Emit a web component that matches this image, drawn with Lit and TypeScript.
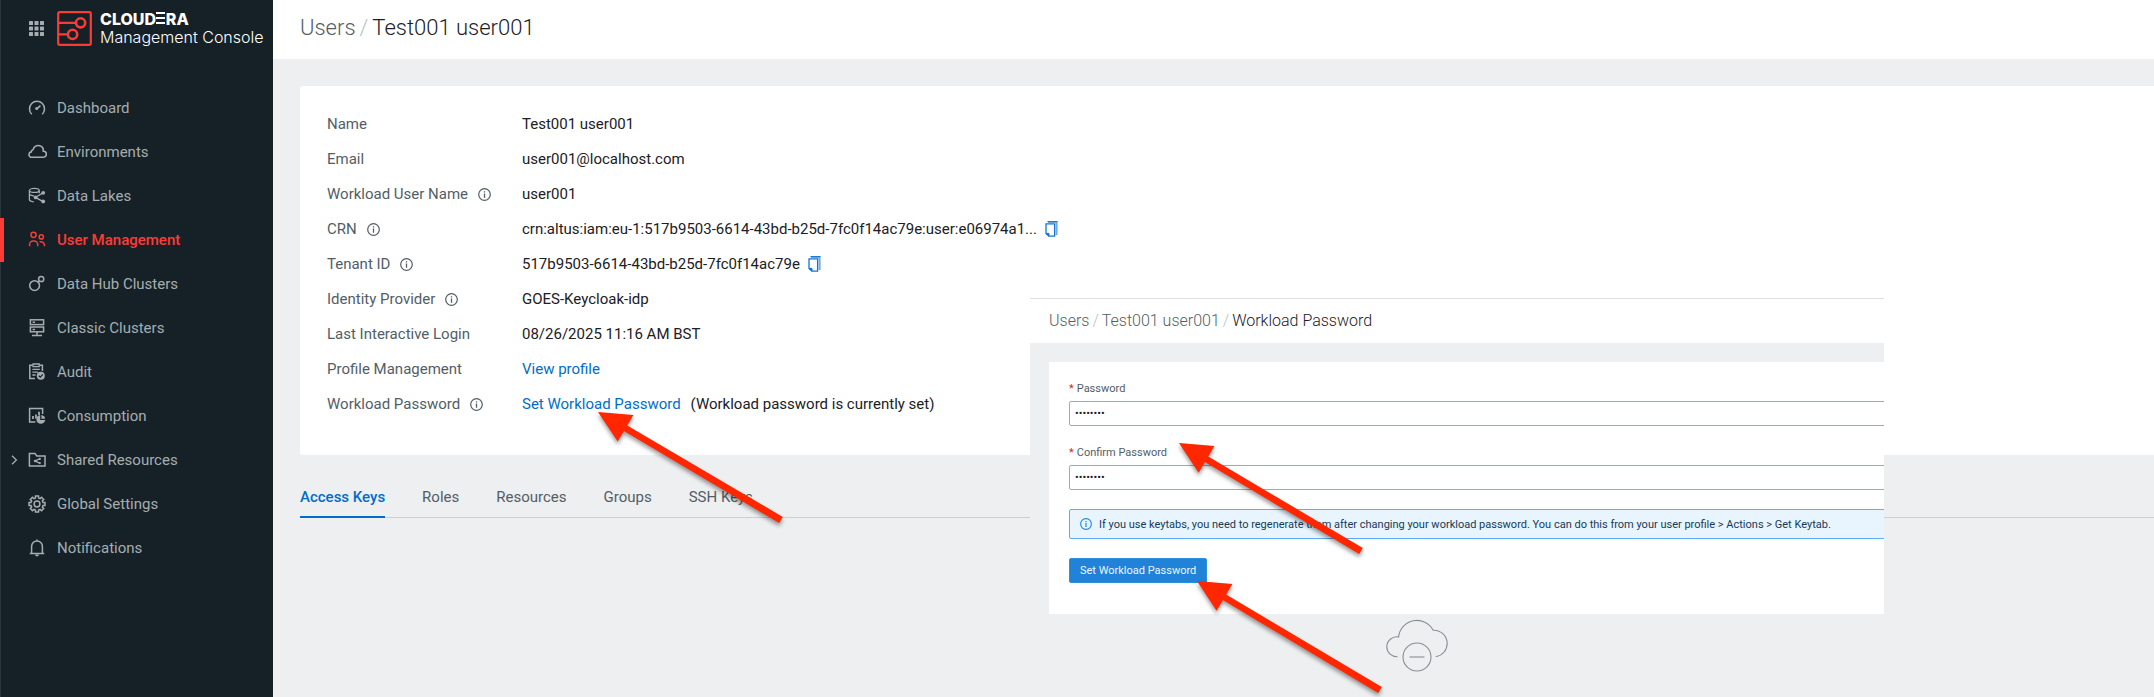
import { LitElement, html, svg, css, nothing } from "lit";
import { customElement, property } from "lit/decorators.js";
import { classMap } from "lit/directives/class-map.js";

type NavItem = { label: string; icon: string; active?: boolean; expandable?: boolean };
type Detail = { label: string; info?: boolean; value?: string; copy?: boolean; link?: string; note?: string };
type Arrow = { tip: [number, number]; tail: [number, number] };

const NAV: NavItem[] = [
  { label: "Dashboard", icon: "gauge" },
  { label: "Environments", icon: "cloud" },
  { label: "Data Lakes", icon: "lake" },
  { label: "User Management", icon: "users", active: true },
  { label: "Data Hub Clusters", icon: "hub" },
  { label: "Classic Clusters", icon: "servers" },
  { label: "Audit", icon: "audit" },
  { label: "Consumption", icon: "usage" },
  { label: "Shared Resources", icon: "folder", expandable: true },
  { label: "Global Settings", icon: "gear" },
  { label: "Notifications", icon: "bell" },
];

const DETAILS: Detail[] = [
  { label: "Name", value: "Test001 user001" },
  { label: "Email", value: "user001@localhost.com" },
  { label: "Workload User Name", info: true, value: "user001" },
  { label: "CRN", info: true, value: "crn:altus:iam:eu-1:517b9503-6614-43bd-b25d-7fc0f14ac79e:user:e06974a1...", copy: true },
  { label: "Tenant ID", info: true, value: "517b9503-6614-43bd-b25d-7fc0f14ac79e", copy: true },
  { label: "Identity Provider", info: true, value: "GOES-Keycloak-idp" },
  { label: "Last Interactive Login", value: "08/26/2025 11:16 AM BST" },
  { label: "Profile Management", link: "View profile" },
  { label: "Workload Password", info: true, link: "Set Workload Password", note: "(Workload password is currently set)" },
];

const TABS = ["Access Keys", "Roles", "Resources", "Groups", "SSH Keys"];

const ARROWS: Arrow[] = [
  { tip: [598, 412], tail: [781, 520] },
  { tip: [1179, 443], tail: [1361, 551] },
  { tip: [1197, 581], tail: [1380, 690] },
];

// Eight-toothed outline around (10, 10).
const gearPath = (): string => {
  const points: string[] = [];
  for (let i = 0; i < 8; i++) {
    const a = (i * Math.PI) / 4;
    for (const [d, r] of [[-0.26, 6.2], [-0.19, 8.1], [0.19, 8.1], [0.26, 6.2]]) {
      points.push(`${(10 + r * Math.sin(a + d)).toFixed(2)} ${(10 - r * Math.cos(a + d)).toFixed(2)}`);
    }
  }
  return `M${points.join("L")}Z`;
};

const ICONS: Record<string, unknown> = {
  gauge: svg`<path d="M4.8 16.2A7.5 7.5 0 1 1 15.2 16.2" stroke-width="1.5"/><path d="M10 10.6 13.4 7.6" stroke-width="1.6"/><circle cx="9.7" cy="10.6" r="1.5" class="solid"/>`,
  cloud: svg`<path d="M3.6 15.2H16.4A2.9 2.9 0 0 0 16.3 9.2 5.1 5.1 0 0 0 12.8 3.8 5 5 0 0 0 6.2 7.4 2.8 2.8 0 0 0 4.2 9.9 2.8 2.8 0 0 0 3.6 15.2Z" stroke-width="1.6"/>`,
  lake: svg`<ellipse cx="7.3" cy="4.4" rx="4.9" ry="2"/><path d="M2.4 4.4V13.6C2.4 14.8 4.3 15.7 6.8 15.8M12.2 4.4V7.2M2.4 8C3 9.2 5 9.8 7 9.8"/><path d="M16.2 6.8 8.4 11.4 16.2 15.6"/><circle cx="16.2" cy="6.8" r="1.9" class="solid"/><circle cx="8.6" cy="11.4" r="1.9" class="solid"/><circle cx="16.2" cy="15.4" r="1.9" class="solid"/>`,
  users: svg`<circle cx="6.5" cy="4.8" r="2.6" stroke-width="1.5"/><circle cx="14.3" cy="6.9" r="2.1" stroke-width="1.5"/><path d="M2.6 16.2V14.6A3.6 3.6 0 0 1 6.2 11H7.1A3.6 3.6 0 0 1 10.7 14.6V16.2M12.6 11.8C15.2 11.2 17.4 12.6 17.4 15.2V16.2" stroke-width="1.5"/>`,
  hub: svg`<circle cx="7.6" cy="11.6" r="4.9" stroke-width="1.5"/><circle cx="14.2" cy="5" r="2.6" stroke-width="1.5"/><path d="M11.2 8.2 12.3 7"/>`,
  servers: svg`<rect x="3.4" y="1.8" width="13.2" height="4.8" stroke-width="1.5"/><rect x="3.4" y="9" width="13.2" height="4.8" stroke-width="1.5"/><path d="M5.6 4.2H8M5.6 11.4H8M10 13.8V17.4M5 17.6H15" stroke-width="1.5"/>`,
  audit: svg`<path d="M8 16.4H2.8V3.2H5.6M12.6 3.2H15.4V9" stroke-width="1.5"/><path d="M6 2H12.2V4.6H6Z"/><path d="M5.4 7.4H12.8M5.4 10.2H11M5.4 13H8.6"/><circle cx="13.8" cy="13.8" r="4" class="solid"/><path d="M11.8 13.8 13.3 15.2 15.9 12.4" class="cut"/>`,
  usage: svg`<path d="M8.4 16H2.6V2.6H15.6V8" stroke-width="1.5"/><path d="M6 13V10M9 12.4V8.4M12 9V5.8" stroke-width="1.8"/><circle cx="13.8" cy="13.4" r="4.4" class="solid"/><path d="M13.8 8.6V13.4H18.6" class="cut"/>`,
  folder: svg`<path d="M2.4 16V3.6H8L9.8 6H18V16Z" stroke-width="1.5"/><path d="M12.8 8.8 8 11 12.8 13.2"/><circle cx="12.8" cy="8.9" r="1.1" class="solid"/><circle cx="8.2" cy="11" r="1.3" class="solid"/><circle cx="12.8" cy="13.1" r="1.1" class="solid"/>`,
  gear: svg`<path d=${gearPath()} stroke-width="1.5"/><circle cx="10" cy="10" r="2.9" stroke-width="1.5"/>`,
  bell: svg`<path d="M2.8 15.6H17.2M4.6 15.4V8.4A5.4 5.4 0 0 1 15.4 8.4V15.4M10 1.4V3" stroke-width="1.5"/><path d="M8 16.6A2 1.8 0 0 0 12 16.6Z" class="solid"/>`,
};

@customElement("nav-icon")
class NavIcon extends LitElement {
  @property() name = "";
  static styles = css`
    :host { display: block; flex: none; width: 20px; height: 20px; }
    svg { display: block; fill: none; stroke: currentColor; stroke-width: 1.3; }
    .solid { fill: currentColor; stroke: none; }
    .cut { stroke: #162127; stroke-width: 1.2; }
  `;
  render() {
    return html`<svg width="20" height="20" viewBox="0 0 20 20" aria-hidden="true">${ICONS[this.name] ?? nothing}</svg>`;
  }
}

@customElement("side-bar")
class SideBar extends LitElement {
  static styles = css`
    :host { display: flex; flex-direction: column; box-sizing: border-box; background: #162127; color: #a6adb0; border-left: 1px solid #2b363c; }
    .brand { display: flex; align-items: center; height: 56px; padding-left: 28px; margin-bottom: 30px; }
    .launcher { display: block; padding: 0; border: 0; background: none; color: #a6adb0; }
    .launcher svg { display: block; fill: currentColor; }
    .logo { flex: none; margin-left: 13px; fill: none; stroke: #fc3b37; }
    .names { display: flex; flex-direction: column; margin-left: 8px; color: #fff; font-family: Inter, sans-serif; white-space: nowrap; }
    .company { font-size: 16px; line-height: 17px; font-weight: 800; }
    .bars { color: transparent; background: linear-gradient(#fff, #fff) 0 3px / 9px 2px no-repeat, linear-gradient(#fff, #fff) 0 8px / 9px 2px no-repeat, linear-gradient(#fff, #fff) 0 13px / 9px 2px no-repeat; }
    .product { font-size: 16px; line-height: 18px; font-weight: 300; }
    ul { list-style: none; margin: 0; padding: 0; }
    a { position: relative; display: flex; align-items: center; gap: 10px; height: 44px; padding-left: 26px; color: inherit; font-size: 15px; text-decoration: none; }
    .active { color: #fc3b37; font-weight: 500; }
    .active::before { content: ""; position: absolute; left: -1px; top: 0; bottom: 0; width: 4px; background: #fc3b37; }
    .chevron { position: absolute; left: 9px; top: 17px; fill: none; stroke: currentColor; stroke-width: 1.3; }
  `;
  render() {
    return html`
      <div class="brand">
        <button class="launcher" aria-label="Applications">
          <svg width="15" height="15" viewBox="0 0 15 15">
            ${[0, 5.5, 11].map((y) => [0, 5.5, 11].map((x) => svg`<rect x=${x} y=${y} width="4" height="4" rx=".6"/>`))}
          </svg>
        </button>
        <svg class="logo" width="35" height="35" viewBox="0 0 35 35" stroke-width="2.2" aria-hidden="true">
          <rect x="1.2" y="1.2" width="32.6" height="32.6" rx="1.6"/>
          <circle cx="23.6" cy="11.8" r="4.6" stroke-width="2.6"/><circle cx="15.6" cy="23.4" r="4.6" stroke-width="2.6"/>
          <path d="M1.2 11.8H19M1.2 23.4H11"/>
        </svg>
        <div class="names">
          <span class="company">CLOUD<span class="bars">E</span>RA</span>
          <span class="product">Management Console</span>
        </div>
      </div>
      <nav><ul>
        ${NAV.map((n) => html`<li><a href="#" class=${classMap({ active: !!n.active })}>
          ${n.expandable ? html`<svg class="chevron" width="8" height="10" viewBox="0 0 8 10"><path d="M2 .8 6.4 5 2 9.2"/></svg>` : nothing}
          <nav-icon name=${n.icon}></nav-icon><span>${n.label}</span></a></li>`)}
      </ul></nav>`;
  }
}

const infoIcon = (size: number) => svg`<svg class="info" width=${size} height=${size} viewBox="0 0 13 13" aria-hidden="true">
  <circle cx="6.5" cy="6.5" r="5.8" fill="none" stroke="currentColor" stroke-width="1.2"/>
  <path d="M6.5 5.4V9.8M6.5 3.2V4.5" stroke="currentColor" stroke-width="1.3"/></svg>`;

@customElement("user-details")
class UserDetails extends LitElement {
  static styles = css`
    :host { display: block; background: #fff; border-radius: 3px 0 0 3px; padding: 20px 27px 34px; }
    dl { display: grid; grid-template-columns: 195px 1fr; grid-auto-rows: 35px; align-items: center; margin: 0; font-size: 15px; white-space: nowrap; }
    dt { display: flex; align-items: center; gap: 10px; color: #525e66; }
    dd { display: flex; align-items: center; gap: 8px; margin: 0; color: #1b2025; }
    a { color: #006dcc; text-decoration: none; margin-right: 2px; }
    .info { display: block; margin-top: 2px; }
    button { display: block; padding: 0; border: 0; background: none; color: #1673d2; }
    button svg { display: block; }
  `;
  render() {
    return html`<dl>${DETAILS.map((d) => html`
      <dt>${d.label}${d.info ? infoIcon(13) : nothing}</dt>
      <dd>
        ${d.value ? html`<span>${d.value}</span>` : nothing}
        ${d.copy ? html`<button aria-label="Copy ${d.label}">
          <svg width="13" height="16" viewBox="0 0 13 16" fill="none" stroke="currentColor">
            <path d="M3 1H11.6V14" stroke-width="2" opacity=".6"/><path d="M2.4.6H12.4" />
            <path d="M1 2.8H9.6V15.2H4L1 12.4Z" stroke-width="1.3" fill="#fff"/><path d="M1 12.4H4V15.2Z" fill="currentColor"/>
          </svg></button>` : nothing}
        ${d.link ? html`<a href="#">${d.link}</a>` : nothing}
        ${d.note ? html`<span>${d.note}</span>` : nothing}
      </dd>`)}</dl>`;
  }
}

@customElement("password-window")
class PasswordWindow extends LitElement {
  static styles = css`
    :host { display: flex; flex-direction: column; overflow: hidden; background: #eeeff1; border-top: 1px solid #dcdfe0; white-space: nowrap; }
    .crumbs { display: flex; align-items: center; gap: 3px; box-sizing: border-box; height: 44px; padding: 0 0 2px 19px; background: #fff; font-size: 16px; font-weight: 300; color: #525e66; }
    .crumbs a { color: inherit; text-decoration: none; }
    .crumbs i { color: #b9bfc3; font-style: normal; }
    .crumbs b { color: #1b2025; font-weight: 300; }
    form { display: flex; flex-direction: column; align-items: stretch; gap: 19px; margin: 19px -4px 0 19px; padding: 19px 0 31px 20px; background: #fff; font-size: 11px; }
    .field { display: flex; flex-direction: column; gap: 4px; }
    label { line-height: 16px; color: #525e66; }
    label span { color: #e02020; margin-right: 3px; }
    input { box-sizing: border-box; height: 25px; padding: 0 5px; border: 1px solid #a3a9ad; border-radius: 2px; background: #fff; color: #1b2025; font: 11px Roboto, sans-serif; outline: none; }
    .alert { display: flex; align-items: center; gap: 7px; box-sizing: border-box; height: 30px; padding-left: 10px; border: 1px solid #5cacf6; border-radius: 2px; background: #e8f5ff; color: #173a54; }
    .info { color: #1c87e5; }
    button { align-self: flex-start; height: 25px; padding: 0 10px; border: 1px solid #2f8fe0; border-radius: 2px; background: #2083d8; color: #eef7ff; font: 11px Roboto, sans-serif; }
  `;
  render() {
    return html`
      <nav class="crumbs"><a href="#">Users</a><i>/</i><a href="#">Test001 user001</a><i>/</i><b>Workload Password</b></nav>
      <form>
        <div class="field"><label for="pw"><span>*</span>Password</label><input id="pw" type="password" value="password" autocomplete="off" /></div>
        <div class="field"><label for="confirm"><span>*</span>Confirm Password</label><input id="confirm" type="password" value="password" autocomplete="off" /></div>
        <div class="alert" role="note">${infoIcon(12)}<span>If you use keytabs, you need to regenerate them after changing your workload password. You can do this from your user profile &gt; Actions &gt; Get Keytab.</span></div>
        <button type="button">Set Workload Password</button>
      </form>`;
  }
}

// Outline of an arrow from tail to tip, in page coordinates.
const arrowPoints = ({ tip, tail }: Arrow): string => {
  const dx = tail[0] - tip[0], dy = tail[1] - tip[1], len = Math.hypot(dx, dy);
  const ux = dx / len, uy = dy / len;
  const at = (along: number, side: number) =>
    `${(tip[0] + ux * along - uy * side).toFixed(1)},${(tip[1] + uy * along + ux * side).toFixed(1)}`;
  return [at(0, 0), at(32, -15.5), at(32, -3.2), at(len, -3.6), at(len, 3.6), at(32, 3.2), at(32, 15.5)].join(" ");
};

@customElement("app-root")
class AppRoot extends LitElement {
  static styles = css`
    :host { position: relative; display: grid; grid-template-columns: 273px 1fr; min-height: 100vh; overflow: hidden; background: #eeeff1; font-family: Roboto, sans-serif; }
    main { display: flex; flex-direction: column; min-width: 0; }
    header { display: flex; align-items: center; gap: 4px; box-sizing: border-box; height: 59px; padding: 0 27px 5px; background: #fff; color: #525e66; font-size: 22px; font-weight: 300; }
    header a { color: inherit; text-decoration: none; }
    header i { color: #b9bfc3; font-style: normal; }
    h1 { margin: 0; color: #1b2025; font-size: 22px; font-weight: 300; }
    .body { padding: 27px 0 0 27px; }
    .tabs { display: flex; gap: 37px; margin-top: 22px; border-bottom: 1px solid #cbcfd2; }
    .tab { height: 41px; margin-bottom: -1px; padding: 0; border: 0; border-bottom: 2px solid transparent; background: none; color: #525e66; font: 15px Roboto, sans-serif; }
    .tab.on { color: #006dcc; border-color: #006dcc; font-weight: 500; }
    .empty { display: flex; justify-content: center; padding: 101px 0 24px 380px; }
    .window { position: absolute; left: 1030px; top: 298px; width: 854px; }
    .arrows { position: absolute; inset: 0; width: 100%; height: 100%; pointer-events: none; fill: #ff2600; filter: drop-shadow(0 3px 2px rgb(0 0 0 / 0.4)); }
  `;
  render() {
    return html`
      <side-bar></side-bar>
      <main>
        <header><a href="#">Users</a><i>/</i><h1>Test001 user001</h1></header>
        <div class="body">
          <user-details></user-details>
          <div class="tabs" role="tablist">
            ${TABS.map((t, i) => html`<button role="tab" aria-selected=${i === 0} class=${classMap({ tab: true, on: i === 0 })}>${t}</button>`)}
          </div>
          <div class="empty">
            <svg width="62" height="53" viewBox="0 0 62 53" fill="none" stroke="#8a8e92" stroke-width="1.1" aria-hidden="true">
              <path d="M11.6 37.7A10 10 0 0 1 .8 28A10 10 0 0 1 12.6 18A18.4 18.4 0 0 1 47.2 11.2A13.4 13.4 0 0 1 61.2 24.5A13.4 13.4 0 0 1 49.7 37.7"/>
              <circle cx="31" cy="38" r="14"/><path d="M23.5 38H38.5"/>
            </svg>
          </div>
        </div>
      </main>
      <password-window class="window"></password-window>
      <svg class="arrows" aria-hidden="true">${ARROWS.map((a) => svg`<polygon points=${arrowPoints(a)}/>`)}</svg>`;
  }
}
